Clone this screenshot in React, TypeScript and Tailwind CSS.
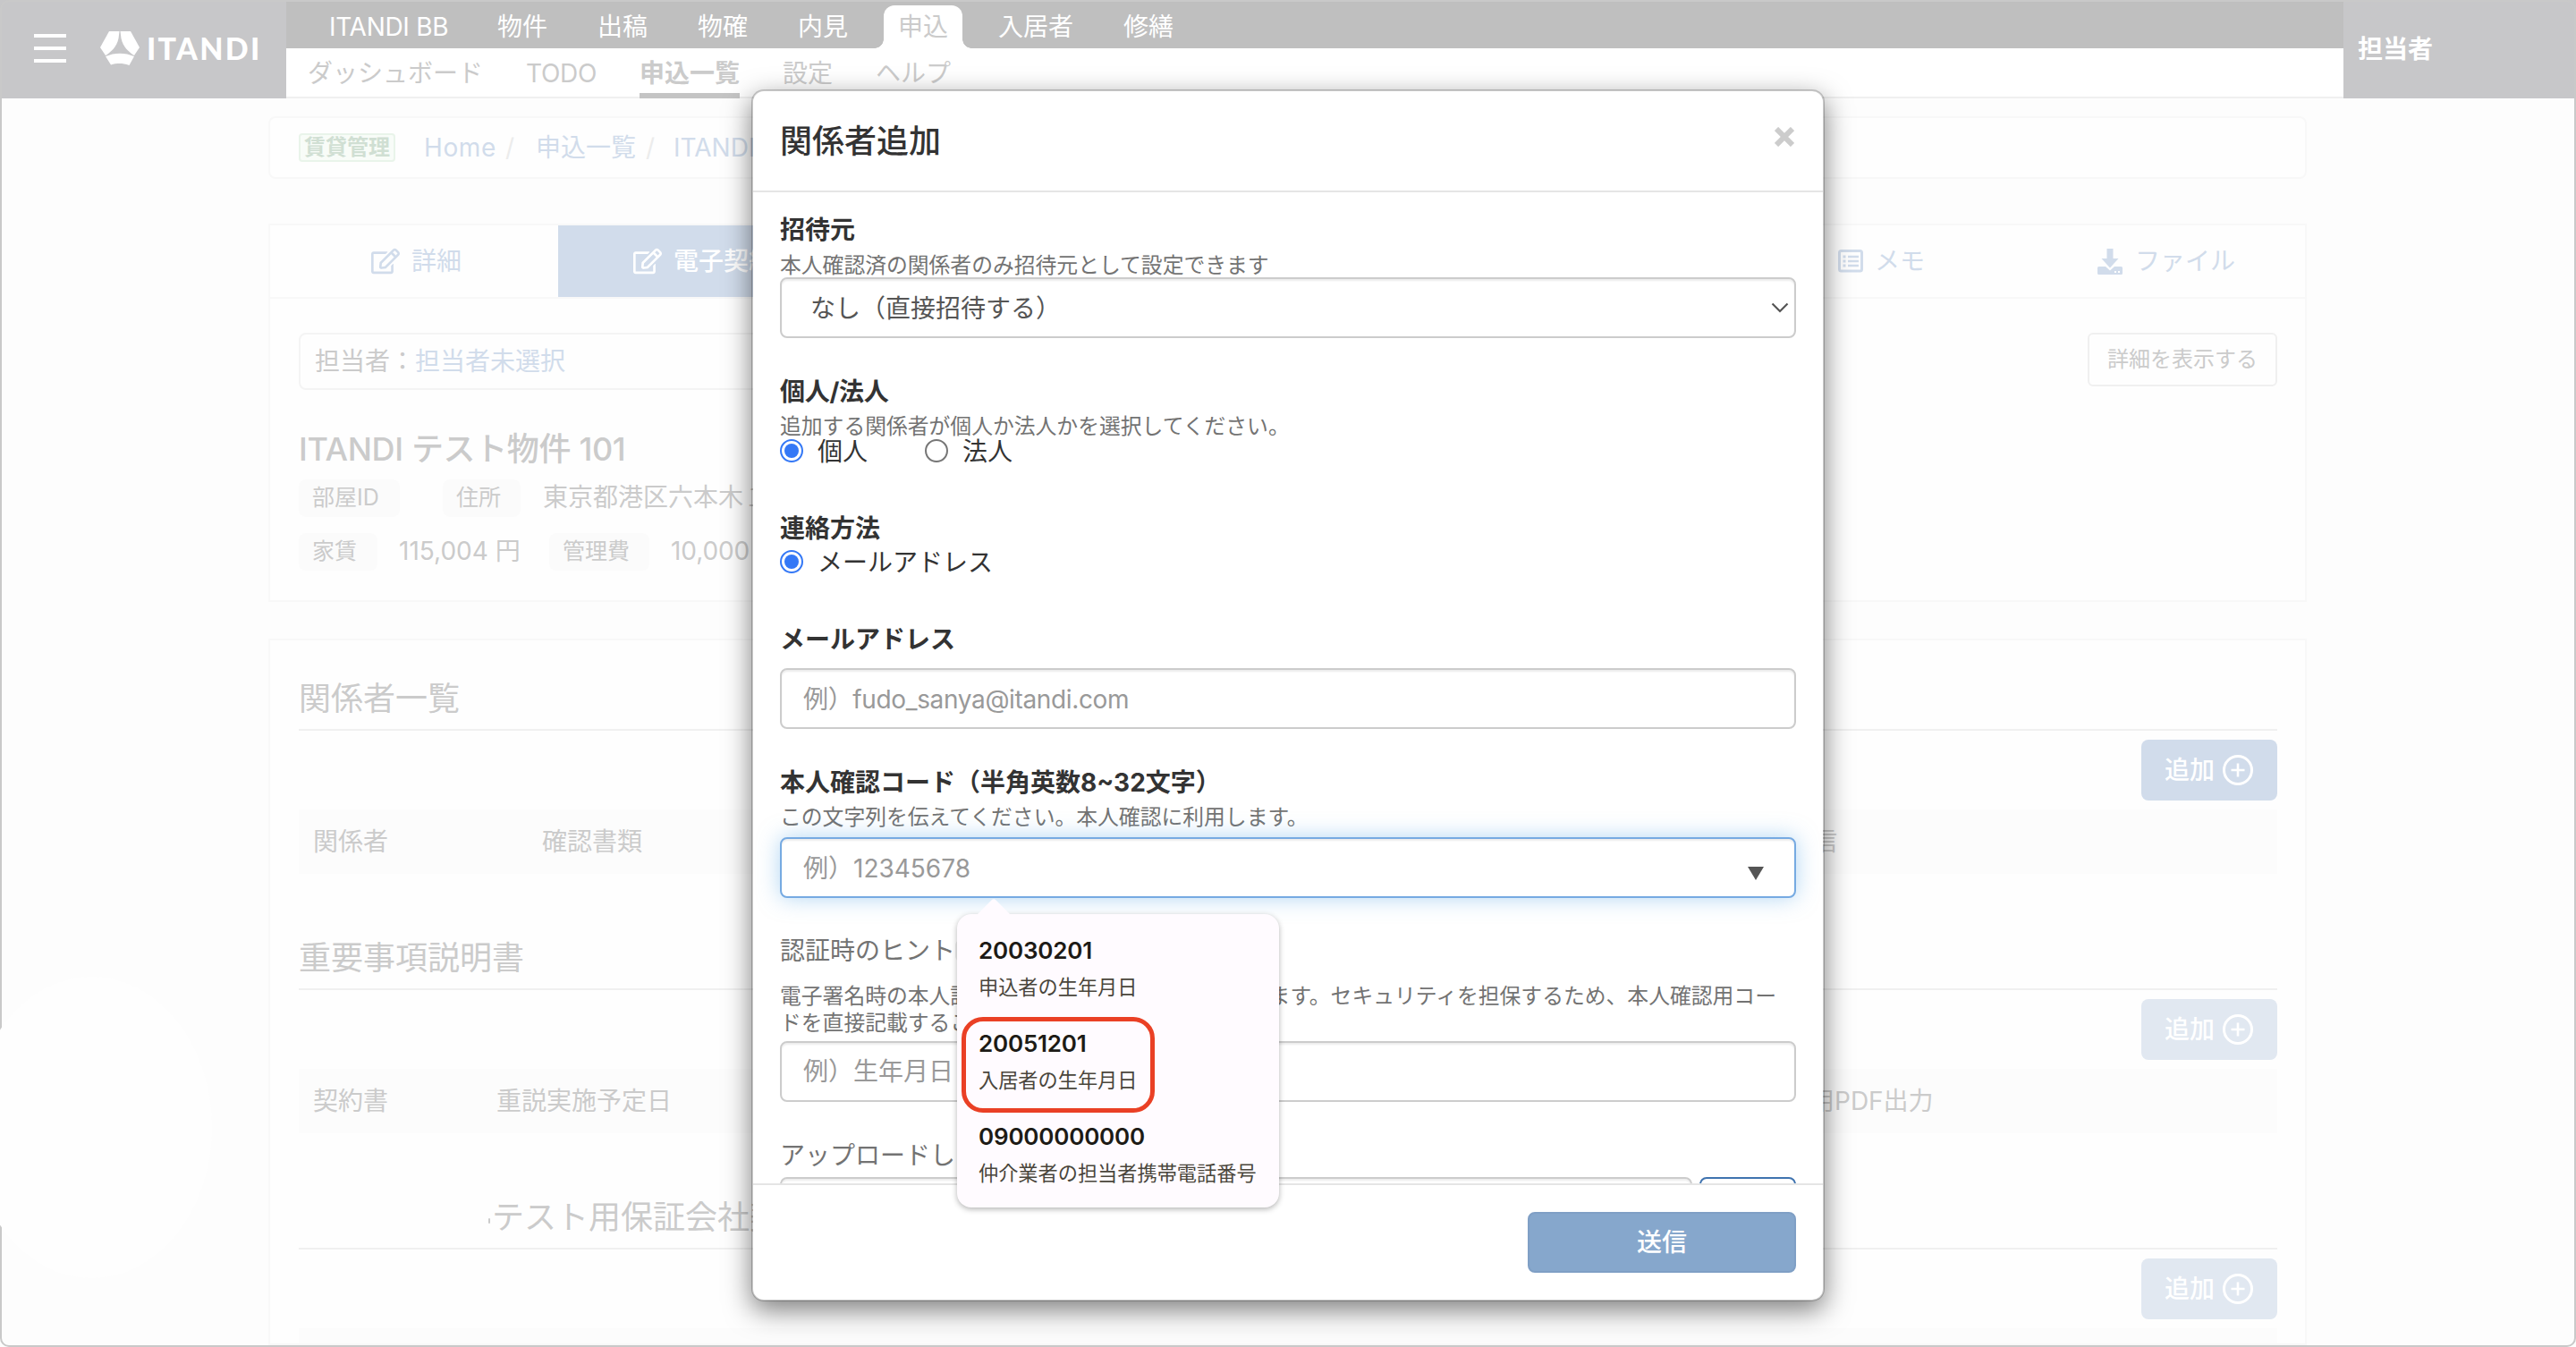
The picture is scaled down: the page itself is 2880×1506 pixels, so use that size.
import type { ReactNode } from "react";
import { FaRegEdit } from "react-icons/fa";

const navItems = ["物件", "出稿", "物確", "内見"];

const suggestions = [
  { value: "20030201", label: "申込者の生年月日" },
  { value: "20051201", label: "入居者の生年月日" },
  { value: "09000000000", label: "仲介業者の担当者携帯電話番号" },
];

function Logo() {
  return (
    <svg className="block h-[38px] w-[44px]" viewBox="0 0 44 38" fill="white">
      <path d="M10 0H21.500L20.500 8C18.500 17 12.500 23 6 27L0 18Z" />
      <path d="M22.500 0H34L44 18L38 27C31.500 23 25.500 17 23.500 8Z" />
      <path d="M6 28C16 23.500 28 23.500 38 28L32.500 38C25 35.500 19 35.500 12 37.500Z" />
    </svg>
  );
}

function ListIcon() {
  return (
    <svg className="block h-[26px] w-[28px]" viewBox="0 0 28 26" fill="none">
      <rect x="1.500" y="1.500" width="25" height="22.500" rx="2" stroke="#d1dceb" strokeWidth="3" />
      <path d="M11 8H23M11 13H23M11 18H23" stroke="#d1dceb" strokeWidth="2.600" />
      <path d="M5.500 8H8.500M5.500 13H8.500M5.500 18H8.500" stroke="#d1dceb" strokeWidth="3" />
    </svg>
  );
}

function DownloadIcon() {
  return (
    <svg className="block h-[29px] w-[28px]" viewBox="0 0 28 29" fill="#d1dceb">
      <path d="M10.500 0H17.500V11H23.500L14 21.500L4.500 11H10.500Z" />
      <path d="M1.500 20H9L14 24.500L19 20H26.500Q28 20 28 21.500V27.500Q28 29 26.500 29H1.500Q0 29 0 27.500V21.500Q0 20 1.500 20Z" />
      <path d="M19 25H21V27H19ZM23 25H25V27H23Z" fill="white" />
    </svg>
  );
}

function PlusCircle() {
  return (
    <svg className="block size-[34px]" viewBox="0 0 34 34" fill="none" stroke="white">
      <circle cx="17" cy="17" r="15.500" strokeWidth="3" />
      <path d="M17 9.500V24.500M9.500 17H24.500" strokeWidth="2.600" />
    </svg>
  );
}

function Header() {
  return (
    <header className="flex h-[110px] text-[28px] leading-[40px]">
      <div className="flex w-[320px] items-start bg-[#c7c7c9] pl-[38px]">
        <div className="mt-[38px] flex flex-col gap-[10px]">
          <i className="block h-1 w-9 bg-white" />
          <i className="block h-1 w-9 bg-white" />
          <i className="block h-1 w-9 bg-white" />
        </div>
        <div className="mt-[35px] ml-[38px]">
          <Logo />
        </div>
        <span className="mt-[34px] ml-[8px] font-['Lato',sans-serif] text-[34px] font-black tracking-[2.300px] text-white">ITANDI</span>
      </div>
      <div className="flex grow flex-col">
        <nav className="flex h-[54px] items-center bg-[#bfbfbf] pl-[48px] text-white">
          <span className="w-[188px] pt-[5px] tracking-[-0.3px]">ITANDI BB</span>
          {navItems.map((item) => (
            <span key={item} className="w-[112px] pt-[5px]">{item}</span>
          ))}
          <div className="relative -ml-[16px] flex h-[48px] w-[88px] items-center justify-center self-end rounded-t-[12px] bg-white text-[#cbcbcb]">
            <i className="absolute bottom-0 -left-[10px] size-[10px] bg-[radial-gradient(circle_at_0_0,#bfbfbf_9.500px,white_10px)]" />
            <span className="-mt-px">申込</span>
            <i className="absolute -right-[10px] bottom-0 size-[10px] bg-[radial-gradient(circle_at_100%_0,#bfbfbf_9.500px,white_10px)]" />
          </div>
          <span className="ml-[40px] w-[140px] pt-[5px]">入居者</span>
          <span className="pt-[5px]">修繕</span>
        </nav>
        <nav className="flex h-[56px] gap-[48px] border-b-2 border-[#f0f0f0] bg-white pt-[8px] pl-[24px] text-[#cbcbcb]">
          <span>ダッシュボード</span>
          <span className="w-[79px] tracking-[-0.3px]">TODO</span>
          <span className="h-[48px] w-[112px] border-b-[6px] border-[#c4c4c4] font-bold">申込一覧</span>
          <span>設定</span>
          <span>ヘルプ</span>
        </nav>
      </div>
      <div className="flex w-[260px] items-center bg-[#c7c7c9] pl-[16px] font-bold text-white">担当者</div>
    </header>
  );
}

function Breadcrumb() {
  return (
    <div className="mt-5 flex h-[70px] items-center rounded-[8px] border-2 border-[#f8f8f8] bg-[#fefefe] pl-[32px] text-[28px] text-[#d1dceb]">
      <span className="flex h-[32px] w-[108px] items-center justify-center rounded-[4px] border-2 border-[#e9f4ea] bg-[#f8fcf8] text-[24px] font-bold text-[#d0dfd3]">賃貸管理</span>
      <span className="ml-[32px] w-[81px] tracking-[0.6px]">Home</span>
      <span className="ml-[10px] w-[34px] text-[#ececec]">/</span>
      <span className="w-[112px]">申込一覧</span>
      <span className="ml-[11px] w-[31px] text-[#ececec]">/</span>
      <span>ITANDI</span>
    </div>
  );
}

function Chip({ children, className }: { children: ReactNode; className: string }) {
  return (
    <span className={`flex h-[42px] items-center rounded-[8px] bg-[#fbfbfb] pl-[15px] text-[25px] ${className}`}>{children}</span>
  );
}

function Summary() {
  return (
    <section className="mt-[50px] h-[423px] border-2 border-[#f8f8f8] bg-[#fefefe] text-[28px]">
      <div className="flex h-[82px] border-b-2 border-[#f8f8f8] text-[#d1dceb]">
        <div className="flex w-[322px] items-center pl-[113px]">
          <FaRegEdit className="size-[32px]" />
          <span className="ml-[13px]">詳細</span>
        </div>
        <div className="flex w-[322px] items-center bg-[#d1dceb] pl-[84px] text-white">
          <FaRegEdit className="size-[32px]" />
          <span className="ml-[13px] font-medium">電子契約</span>
        </div>
        <div className="ml-auto flex w-[324px] items-center pl-[114px]">
          <ListIcon />
          <span className="ml-[13px]">メモ</span>
        </div>
        <div className="flex w-[312px] items-center pl-[80px]">
          <DownloadIcon />
          <span className="ml-[14px]">ファイル</span>
        </div>
      </div>
      <div className="px-[32px] pt-[38px] text-[#cbcbcb]">
        <div className="flex items-start justify-between">
          <div className="flex h-[64px] w-[1200px] items-center rounded-[8px] border-2 border-[#f4f4f4] pl-[16px]">
            担当者：<span className="text-[#d1dceb]">担当者未選択</span>
          </div>
          <div className="mr-[-1px] flex h-[60px] w-[212px] items-center justify-center rounded-[6px] border-2 border-[#f0f0f0] text-[24px]">詳細を表示する</div>
        </div>
        <h2 className="mt-[40px] h-[53px] text-[36px] leading-[52px] font-medium tracking-[-0.35px]">ITANDI テスト物件 101</h2>
        <div className="mt-[7px] flex h-[42px] items-center">
          <Chip className="w-[113px]">部屋ID</Chip>
          <Chip className="ml-[48px] w-[87px]">住所</Chip>
          <span className="ml-[25px] pb-[3px]">東京都港区六本木１</span>
        </div>
        <div className="mt-[18px] flex h-[42px] items-center">
          <Chip className="w-[88px]">家賃</Chip>
          <span className="ml-[24px] w-[168px] pb-[2px]">115,004 円</span>
          <Chip className="w-[112px]">管理費</Chip>
          <span className="ml-[24px] pb-[2px] tracking-[-0.1px]">10,000</span>
        </div>
      </div>
    </section>
  );
}

type TableSectionProps = { title: ReactNode; button: string; children?: ReactNode };

function TableSection({ title, button, children }: TableSectionProps) {
  return (
    <div className="h-[290px] shrink-0">
      <h3 className="flex h-[76px] items-center border-b-2 border-[#f0f0f0] pt-[6px] text-[36px]">{title}</h3>
      <div className={`mt-[10px] ml-auto flex h-[68px] w-[152px] items-center gap-[9px] rounded-[8px] pl-[26px] font-medium text-white ${button}`}>
        追加
        <PlusCircle />
      </div>
      <div className="mt-[10px] flex h-[72px] items-center bg-[#fcfcfc] pl-[16px]">{children}</div>
    </div>
  );
}

function Tables() {
  return (
    <section className="mt-[41px] flex h-[790px] flex-col overflow-hidden border-2 border-[#f8f8f8] bg-[#fefefe] pt-[25px] pr-[31px] pl-[32px] text-[28px] text-[#cbcbcb]">
      <TableSection title="関係者一覧" button="bg-[#d1dceb]">
        <span className="w-[256px]">関係者</span>
        <span>確認書類</span>
        <span className="ml-auto w-[520px]">信</span>
      </TableSection>
      <TableSection title="重要事項説明書" button="bg-[#e1e8f1]">
        <span className="w-[205px]">契約書</span>
        <span>重説実施予定日</span>
        <span className="ml-auto w-[523px]">用PDF出力</span>
      </TableSection>
      <TableSection
        title={
          <>
            <i className="mt-[8px] mr-[2px] ml-[212px] h-[6px] w-[2px] rounded-full bg-[#cbcbcb]" />
            テスト用保証会社契約
          </>
        }
        button="bg-[#e1e8f1]"
      />
    </section>
  );
}

function Field({ children, className = "" }: { children?: ReactNode; className?: string }) {
  return (
    <div className={`flex h-[68px] shrink-0 items-center rounded-[8px] border-2 bg-white pl-[24px] text-[#999] ${className}`}>{children}</div>
  );
}

function Radio({ checked }: { checked?: boolean }) {
  return (
    <i className={`flex size-[26px] items-center justify-center rounded-full border-2 bg-white ${checked ? "border-[#3478f6]" : "border-[#767676]"}`}>
      {checked && <i className="size-[16px] rounded-full bg-[#3478f6]" />}
    </i>
  );
}

const insetShadow = "border-[#ccc] shadow-[inset_0_2px_2px_rgba(0,0,0,0.075)]";

function Modal() {
  return (
    <div className="absolute top-[100px] left-[840px] flex h-[1355px] w-[1200px] flex-col rounded-[14px] border-2 border-black/20 bg-white bg-clip-padding text-[28px] text-[#333] shadow-[0_10px_30px_rgba(0,0,0,0.5)]">
      <div className="flex h-[113px] shrink-0 items-center justify-between border-b-2 border-[#e5e5e5] px-[30px]">
        <h1 className="text-[36px] font-medium">関係者追加</h1>
        <svg className="mr-[2px] mb-[9px] size-[22px]" viewBox="0 0 22 22" stroke="#ccc" strokeWidth="6" strokeLinecap="butt">
          <path d="M2 2L20 20M20 2L2 20" />
        </svg>
      </div>
      <div className="flex h-[1108px] shrink-0 flex-col overflow-hidden px-[30px] leading-[40px] [&>*]:shrink-0">
        <b className="mt-[22px]">招待元</b>
        <p className="h-[33px] text-[23.800px] leading-[39px] text-[#737373]">本人確認済の関係者のみ招待元として設定できます</p>
        <Field className={`justify-between pr-[6px] ${insetShadow}`}>
          <span className="pt-[2px] pl-[8px] text-[#555]">なし（直接招待する）</span>
          <svg className="h-[12px] w-[20px]" viewBox="0 0 20 12" fill="none" stroke="#555" strokeWidth="2.200">
            <path d="M1.500 1.500L10 10L18.500 1.500" />
          </svg>
        </Field>
        <b className="mt-[40px] tracking-[-0.3px]">個人/法人</b>
        <p className="h-[33px] text-[23.800px] leading-[38px] text-[#737373]">追加する関係者が個人か法人かを選択してください。</p>
        <div className="flex h-[26px] items-center">
          <Radio checked />
          <span className="ml-[16px] w-[120px] pt-[2px]">個人</span>
          <Radio />
          <span className="ml-[16px] pt-[2px]">法人</span>
        </div>
        <b className="mt-[54px]">連絡方法</b>
        <div className="mt-[4px] flex h-[26px] items-center">
          <Radio checked />
          <span className="ml-[16px] pt-[2px]">メールアドレス</span>
        </div>
        <b className="mt-[54px]">メールアドレス</b>
        <Field className={`mt-[12px] ${insetShadow}`}>
          <span className="pt-[2px] tracking-[-0.35px]">例）fudo_sanya@itandi.com</span>
        </Field>
        <b className="mt-[40px]">本人確認コード（半角英数8~32文字）</b>
        <p className="h-[41px] text-[23.800px] leading-[38px] text-[#737373]">この文字列を伝えてください。本人確認に利用します。</p>
        <Field className="justify-between border-[#76aae2] pr-[34px] shadow-[inset_0_2px_2px_rgba(0,0,0,0.075),0_0_24px_rgba(102,175,233,0.5)]">
          <span className="pt-[2px]">例）12345678</span>
          <svg className="mt-[12px] h-[15px] w-[18px]" viewBox="0 0 18 15" fill="#555">
            <path d="M0 0H18L9 15Z" />
          </svg>
        </Field>
        <div className="mt-[39px] flex h-[40px] items-center text-[#737373]">
          認証時のヒント
          <i className="h-[24px] w-[56px] rounded-[6px] bg-[#eee]" />
        </div>
        <p className="mt-[16px] h-[65px] text-[23.800px] leading-[30px] whitespace-nowrap text-[#737373]">
          電子署名時の本人認証画面にヒントとして表示されます。セキュリティを担保するため、本人確認用コー
          <br />
          ドを直接記載することはお控えください。
        </p>
        <Field className={insetShadow}>例）生年月日</Field>
        <span className="mt-[40px] text-[#737373]">アップロードした書類</span>
        <div className="mt-[4px] flex gap-[8px]">
          <Field className={`grow ${insetShadow}`} />
          <Field className="w-[108px] border-[#3f73af]" />
        </div>
      </div>
      <div className="flex grow items-start justify-end border-t-2 border-[#e5e5e5] px-[30px] pt-[30px]">
        <div className="flex h-[68px] w-[300px] items-center justify-center rounded-[8px] border-2 border-[#7f9fc5] bg-[#86a7cc] font-medium text-white">送信</div>
      </div>
    </div>
  );
}

function AutofillPopup() {
  return (
    <div className="absolute top-[1022px] left-[1070px] flex h-[328px] w-[360px] flex-col rounded-[16px] bg-[#fffbff] pt-[21px] pl-[24px] shadow-[0_2px_6px_rgba(0,0,0,0.3)]">
      <svg className="absolute -top-[17px] left-[22px] h-[18px] w-[38px]" viewBox="0 0 38 18" fill="#fffbff">
        <path d="M0 18L16.500 1.500Q19 -1 21.500 1.500L38 18Z" />
      </svg>
      {suggestions.map((s) => (
        <div key={s.value} className="h-[104px] shrink-0 text-[#1d1b16]">
          <div className="h-[41px] text-[26px] leading-[40px] font-semibold tracking-[-0.2px]">{s.value}</div>
          <div className="text-[22.200px] leading-[40px] text-[#4a463c]">{s.label}</div>
        </div>
      ))}
      <i className="absolute top-[115px] left-[5px] h-[107px] w-[216px] rounded-[24px] border-[5px] border-[#ea4025]" />
    </div>
  );
}

export default function App() {
  return (
    <div className="relative h-[1506px] w-[2880px] overflow-hidden bg-[#fdfdfd] font-['Inter','Noto_Sans_CJK_JP',sans-serif]">
      <Header />
      <main className="ml-[300px] w-[2279px]">
        <Breadcrumb />
        <Summary />
        <Tables />
      </main>
      <div className="absolute inset-0 rounded-[10px] border-2 border-[#c9c9c9]" />
      <div className="absolute top-[1092px] -left-[32px] h-[337px] w-[269px] rounded-[50%] bg-[#fefefe]" />
      <Modal />
      <AutofillPopup />
    </div>
  );
}
